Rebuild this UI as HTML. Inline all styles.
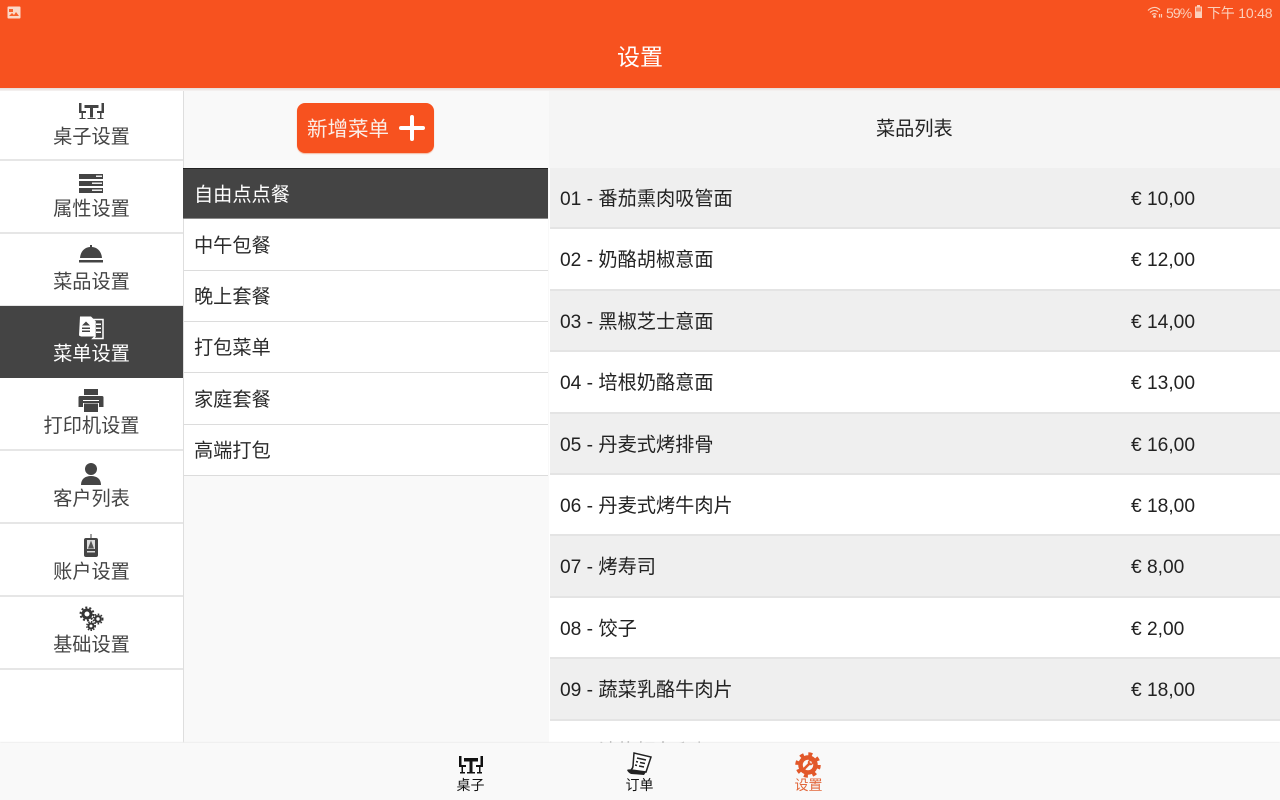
<!DOCTYPE html>
<html><head><meta charset="utf-8">
<style>
*{box-sizing:border-box;margin:0;padding:0}
html,body{width:1280px;height:800px;overflow:hidden;background:#fff}
body{position:relative;font-family:"Liberation Sans","Noto Sans CJK SC",sans-serif;color:#222}
.a{position:absolute}
.t{position:absolute;white-space:nowrap;line-height:1}
#hd{left:0;top:0;width:1280px;height:88px;background:#f7521f}
#sh{left:0;top:88px;width:1280px;height:3px;background:linear-gradient(#e6dcd8,#f5f3f2)}
.sb{left:0;width:183px;height:73px;border-bottom:2px solid #e6e6e6;background:#fff}
.sb .t{left:0;width:183px;text-align:center;font-size:19.2px;color:#444;top:39px}
.sb svg{position:absolute;left:78px;top:8px}
.m{left:184px;width:364px;background:#fff;border-bottom:1px solid #dcdcdc}
.m .t{left:10px;font-size:19.2px;color:#2a2a2a}
.r{left:550px;width:730px;height:61.4px;border-bottom:2px solid #e4e4e4}
.r .n{position:absolute;left:10px;top:22px;font-size:19.2px;line-height:1;color:#222;white-space:nowrap}
.r .p{position:absolute;left:581px;top:22px;font-size:19.2px;line-height:1;color:#222;white-space:nowrap}
.g{background:#efefef}.w{background:#fff}
</style></head><body>
<div class="a" id="hd"></div>
<svg class="a" style="left:7px;top:6px" width="15" height="14" viewBox="0 0 15 14"><rect x=".5" y=".5" width="13" height="12" rx="1" fill="#fbd8c8"/><path d="M2 3h4v3H2zM2 10l3-3 2 2 2-3 3 4z" fill="#f9632e"/></svg>
<svg class="a" style="left:1147px;top:5px" width="16" height="14" viewBox="0 0 16 14" fill="none" stroke="#fbd0bc" stroke-width="1.2"><path d="M1 5.5C5 1.5 10 1.5 13 5M3 7.5c3-2.500 6-2.500 8-.5M5 9.500c2-1.200 3.500-1.200 4.500 0"/><circle cx="7.500" cy="11.500" r=".8" fill="#fbd0bc"/><path d="M12.500 9v3.500M14.500 9v3.500"/></svg>
<div class="t" style="left:1166px;top:6px;font-size:14px;color:#fbd0bc;letter-spacing:-.9px">59%</div>
<svg class="a" style="left:1194px;top:5px" width="10" height="14" viewBox="0 0 10 14"><path d="M3 0h3v1.500h2v11.500H1V1.500h2z" fill="#fbd0bc"/><rect x="2" y="2.500" width="5" height="4" fill="#f9632e" opacity=".6"/></svg>
<div class="t" style="left:1207px;top:6px;font-size:14px;color:#fbd0bc;letter-spacing:-.2px">下午 10:48</div>
<div class="t" style="left:0;width:1280px;top:46px;text-align:center;font-size:23px;color:#fff">设置</div>

<!-- sidebar -->
<div class="a" style="left:0;top:90px;width:183px;height:655px;background:#fff"></div>
<div class="a" style="left:183px;top:90px;width:1.500px;height:655px;background:#dedede"></div>

<div class="a sb" style="top:88px;height:73px"><svg style="top:14px" width="27" height="18" viewBox="0 0 27 18" fill="#444"><path d="M1 1h2.500v8H8v2H1zM26 1h-2.500v8H19v2h7zM6.500 3h14v3h-5.500v9.500h-3V6H6.500zM3.500 11H5v5h2.500v1H1.500v-1h2zM22 11h1.500v5h2v1h-6v-1H22zM9.500 16h8v1h-8z"/></svg><div class="t" style="top:40px">桌子设置</div></div>
<div class="a sb" style="top:161px;height:73px"><svg style="top:12px" width="26" height="21" viewBox="0 0 26 21"><path d="M1 1h24v5H1zM1 8h24v5H1zM1 15h24v5H1z" fill="#444"/><path d="M18 2.500h6v1.500h-6zM14 9.500h10v1.500H14zM14 16.500h10v1.500H14z" fill="#eee"/></svg></div>
<div class="t" style="left:0;width:183px;text-align:center;font-size:19.2px;color:#444;top:200px">属性设置</div>
<div class="a sb" style="top:234px;height:73px"><svg style="top:10px" width="26" height="21" viewBox="0 0 26 21" fill="#444"><path d="M12 1h2v2c6 .500 9.500 5 10 11H2C2.500 8 6 3.500 12 3z"/><rect x="1" y="16" width="24" height="2.500"/></svg><div class="t">菜品设置</div></div>
<div class="a" style="left:0;top:306px;width:183px;height:72px;background:#444"><svg class="a" style="left:78px;top:9px" width="27" height="25" viewBox="0 0 27 24"><path d="M2 1h11l5 5v13l-2 2H3l-2-1z" fill="#fff"/><path d="M14 4h11v19H15l2-2V6z" fill="#444" stroke="#fff" stroke-width="1.500"/><path d="M4 10l4-4 4 4zM4 12h8v1.500H4zM4 15h8v1.500H4z" fill="#444"/><path d="M18 8h5v1.500h-5zM18 12h5v1.500h-5zM18 16h5v1.500h-5z" fill="#fff"/></svg><div class="t" style="left:0;width:183px;text-align:center;font-size:19.2px;color:#fff;top:39px">菜单设置</div></div>
<div class="a sb" style="top:378px;height:73px"><svg style="top:10px" width="26" height="25" viewBox="0 0 26 25" fill="#444"><path d="M6 1h14v6H6zM2 8h22a1.500 1.500 0 0 1 1.500 1.500V19H21v-4H5v4H.5V9.500A1.500 1.500 0 0 1 2 8z"/><path d="M5 12h16v1H5z" fill="#fff"/><path d="M6 15.500h14V24H6z"/></svg><div class="t">打印机设置</div></div>
<div class="a sb" style="top:451px;height:73px"><svg style="top:11px" width="26" height="24" viewBox="0 0 26 24" fill="#444"><circle cx="13" cy="7" r="6"/><path d="M3 23c0-6 4-9 10-9s10 3 10 9z"/></svg><div class="t">客户列表</div></div>
<div class="a sb" style="top:524px;height:73px"><svg style="top:10px" width="26" height="24" viewBox="0 0 26 24"><path d="M12.500 0h1v4h-1z" fill="#444"/><rect x="6" y="4" width="14" height="19" rx="2" fill="#444"/><rect x="9" y="6" width="8" height="9" fill="#ddd"/><path d="M13 6.500l3 8h-6z" fill="#555"/><path d="M9 17h8v1.500H9z" fill="#ddd"/></svg><div class="t">账户设置</div></div>
<div class="a sb" style="top:597px;height:73px"><svg style="top:9px" width="26" height="26" viewBox="0 0 26 26" fill="none" stroke="#333"><circle cx="9" cy="8" r="4" stroke-width="3"/><circle cx="9" cy="8" r="6.500" stroke-width="2" stroke-dasharray="2 2.100"/><circle cx="20" cy="13" r="2.800" stroke-width="2.200"/><circle cx="20" cy="13" r="4.700" stroke-width="1.600" stroke-dasharray="1.600 1.500"/><circle cx="13" cy="20" r="2.500" stroke-width="2"/><circle cx="13" cy="20" r="4.200" stroke-width="1.500" stroke-dasharray="1.500 1.300"/></svg><div class="t">基础设置</div></div>

<!-- middle -->
<div class="a" style="left:184px;top:90px;width:365px;height:655px;background:#f9f9f9"></div>
<div class="a" style="left:297px;top:103px;width:137px;height:50px;background:#f7521f;border-radius:8px;box-shadow:0 1px 1px #f5b89f"></div>
<div class="t" style="left:307px;top:120px;font-size:20.500px;color:#fbeee8">新增菜单</div>
<svg class="a" style="left:399px;top:115px" width="26" height="26" viewBox="0 0 26 26"><path d="M13 2v22M2 13h22" stroke="#fff" stroke-width="4" stroke-linecap="round" fill="none"/></svg>
<div class="a" style="left:183px;top:168px;width:365px;height:51px;background:#444;border-top:1px solid #222;border-bottom:1.500px solid #8a8a8a"><div class="t" style="left:11px;top:17px;font-size:19.200px;color:#fff">自由点点餐</div></div>
<div class="a m" style="top:219px;height:52px"><div class="t" style="top:18px">中午包餐</div></div>
<div class="a m" style="top:271px;height:51px"><div class="t" style="top:17px">晚上套餐</div></div>
<div class="a m" style="top:322px;height:51px"><div class="t" style="top:17px">打包菜单</div></div>
<div class="a m" style="top:373px;height:52px"><div class="t" style="top:18px">家庭套餐</div></div>
<div class="a m" style="top:425px;height:51px"><div class="t" style="top:17px">高端打包</div></div>

<!-- right -->
<div class="a" style="left:549px;top:90px;width:731px;height:78px;background:#f5f5f5"></div>
<div class="t" style="left:876px;top:120px;font-size:19.200px;color:#222">菜品列表</div>
<div class="a r g" style="top:168px"><div class="n">01 - 番茄熏肉吸管面</div><div class="p">€ 10,00</div></div>
<div class="a r w" style="top:229.400px"><div class="n">02 - 奶酪胡椒意面</div><div class="p">€ 12,00</div></div>
<div class="a r g" style="top:290.800px"><div class="n">03 - 黑椒芝士意面</div><div class="p">€ 14,00</div></div>
<div class="a r w" style="top:352.200px"><div class="n">04 - 培根奶酪意面</div><div class="p">€ 13,00</div></div>
<div class="a r g" style="top:413.600px"><div class="n">05 - 丹麦式烤排骨</div><div class="p">€ 16,00</div></div>
<div class="a r w" style="top:475px"><div class="n">06 - 丹麦式烤牛肉片</div><div class="p">€ 18,00</div></div>
<div class="a r g" style="top:536.400px"><div class="n">07 - 烤寿司</div><div class="p">€ 8,00</div></div>
<div class="a r w" style="top:597.800px"><div class="n">08 - 饺子</div><div class="p">€ 2,00</div></div>
<div class="a r g" style="top:659.200px"><div class="n">09 - 蔬菜乳酪牛肉片</div><div class="p">€ 18,00</div></div>
<div class="a r w" style="top:720.600px;border:0"><div class="n">10 - 油炸鳕鱼和虾</div><div class="p">€ 10,00</div></div>

<div class="a" id="sh"></div>

<!-- bottom -->
<div class="a" style="left:0;top:743px;width:1280px;height:57px;background:#f9f9f9;box-shadow:0 -1px 1px #eee"></div>
<svg class="a" style="left:458px;top:755px" width="26" height="20" viewBox="0 0 26 20" fill="#111"><path d="M1 1h2.500v9H8v2H1zM25 1h-2.500v9H18v2h7zM6 3h14v3.500h-5.500v10.500h-3V6.500H6zM3.500 12H5v5h2v1.500H2V17h1.500zM21 12h1.500v5H24v1.500h-5V17h2zM9 17h8v1.500H9z"/></svg>
<div class="t" style="left:456px;top:778px;width:29px;text-align:center;font-size:14px;color:#111">桌子</div>
<svg class="a" style="left:626px;top:751px" width="28" height="26" viewBox="0 0 28 26"><path d="M8 2l17 4-5 15-15-2c1-1 2-2 2-4z" fill="#fff" stroke="#222" stroke-width="1.500"/><path d="M11 7l9 2M10 10.500l2 .5M14 11.500l5 1M9 14l2 .5M13 15l5 1" stroke="#222" stroke-width="1.500"/><path d="M1 19c2-1 4-.500 5 0l14 2-2 3-13-1c-2-1-3-2-4-4z" fill="#222"/></svg>
<div class="t" style="left:625px;top:778px;width:29px;text-align:center;font-size:14px;color:#111">订单</div>
<svg class="a" style="left:795px;top:752px" width="26" height="26" viewBox="0 0 26 26"><circle cx="13" cy="13" r="7.500" fill="none" stroke="#e2582a" stroke-width="4.500"/><circle cx="13" cy="13" r="11" fill="none" stroke="#e2582a" stroke-width="3.500" stroke-dasharray="4 4.640"/><path d="M9.500 16.500l5-5" stroke="#e2582a" stroke-width="2.500" stroke-linecap="round"/><circle cx="15.500" cy="10.500" r="2" fill="none" stroke="#e2582a" stroke-width="1.500"/></svg>
<div class="t" style="left:794px;top:778px;width:29px;text-align:center;font-size:14px;color:#e2683c">设置</div>
</body></html>
